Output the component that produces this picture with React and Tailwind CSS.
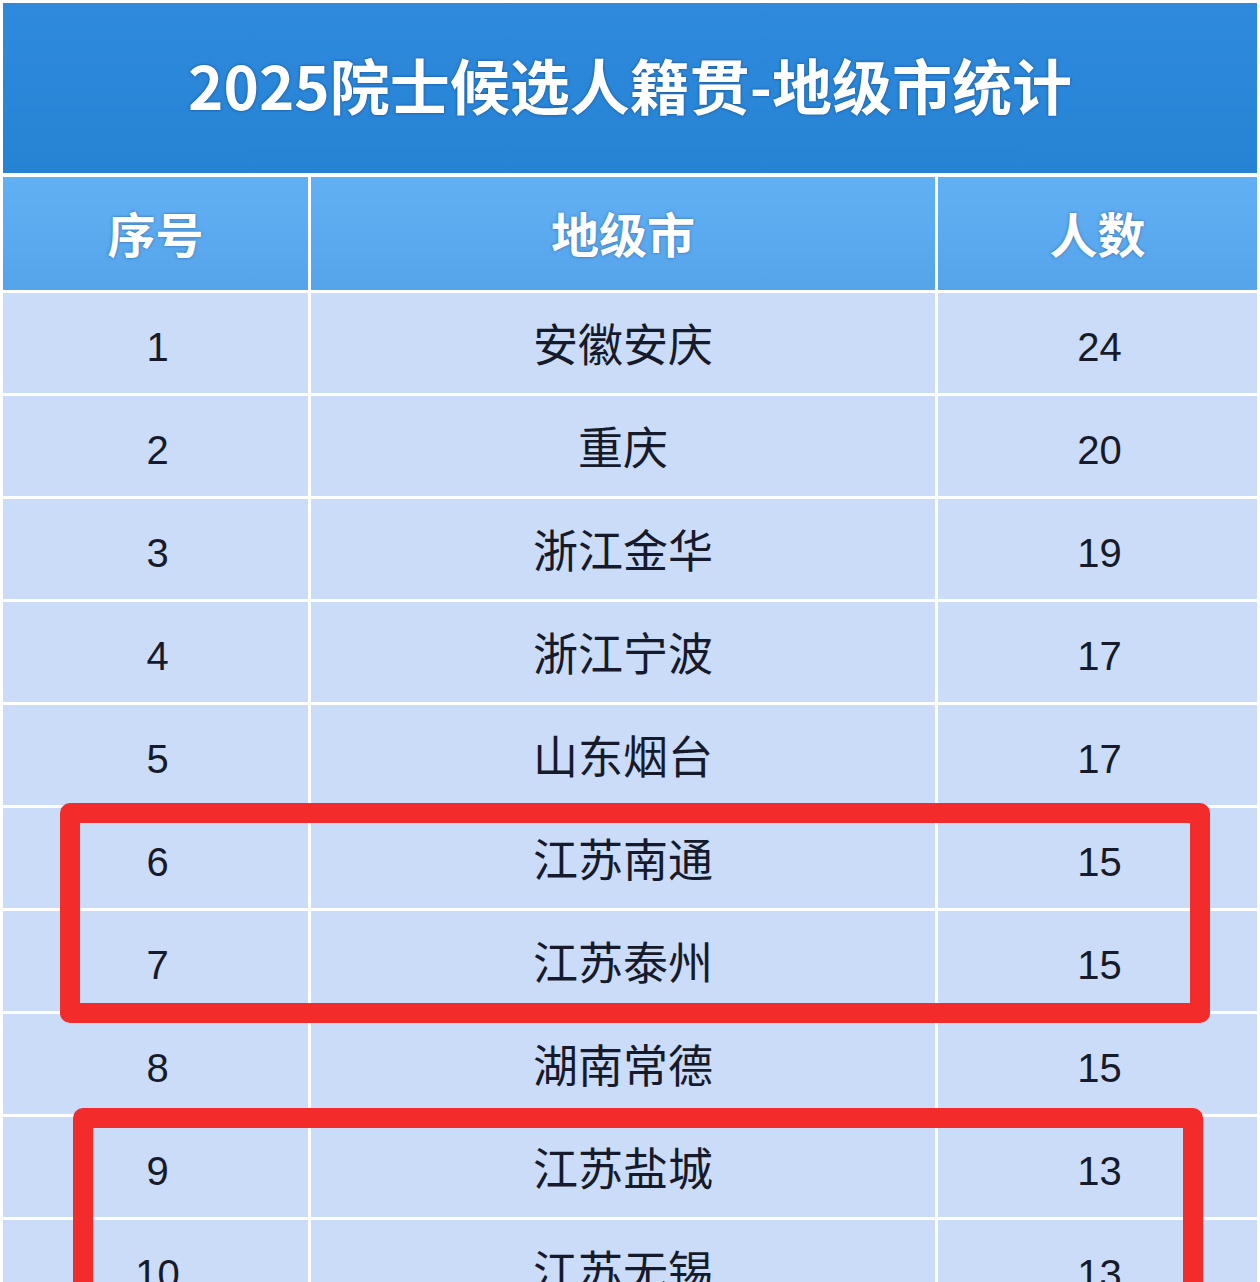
import React from "react"

// 2025 academician candidates by native prefecture-level city
const rows = [
  { no: 1, city: "安徽安庆", count: 24 },
  { no: 2, city: "重庆", count: 20 },
  { no: 3, city: "浙江金华", count: 19 },
  { no: 4, city: "浙江宁波", count: 17 },
  { no: 5, city: "山东烟台", count: 17 },
  { no: 6, city: "江苏南通", count: 15 },
  { no: 7, city: "江苏泰州", count: 15 },
  { no: 8, city: "湖南常德", count: 15 },
  { no: 9, city: "江苏盐城", count: 13 },
  { no: 10, city: "江苏无锡", count: 13 },
]

const font = "font-['Liberation_Sans','Noto_Sans_CJK_SC',sans-serif]"

export default function App() {
  return (
    <div className={`relative w-[1260px] h-[1282px] overflow-hidden bg-white pt-[3px] px-[3px] ${font}`}>
      <div className="flex h-[170px] items-center justify-center bg-gradient-to-b from-[#2f8ade] to-[#2683d3]">
        <h1 className="pb-[8px] font-['Noto_Sans_CJK_SC',sans-serif] text-[60px] font-bold leading-none text-white [text-shadow:0_0_3px_rgba(10,50,110,0.7)]">
          2025院士候选人籍贯-地级市统计
        </h1>
      </div>

      <div className="mt-[4px] grid grid-cols-[305px_624px_319px] gap-[3px]">
        {["序号", "地级市", "人数"].map((h) => (
          <div
            key={h}
            className="flex h-[113px] items-center justify-center bg-gradient-to-b from-[#62b0f4] to-[#55a4ea] pt-[6px] text-[48px] font-bold text-white [text-shadow:0_0_3px_rgba(20,60,120,0.6)]"
          >
            {h}
          </div>
        ))}
        {rows.map((r) => (
          <React.Fragment key={r.no}>
            <div className="flex h-[100px] items-center justify-center bg-[#cbdcf8] pt-[8px] pl-[4px] text-[40px] text-[#161a2b]">
              {r.no}
            </div>
            <div className="flex h-[100px] items-center justify-center bg-[#cbdcf8] pt-[8px] text-[45px] text-[#161a2b]">
              {r.city}
            </div>
            <div className="flex h-[100px] items-center justify-center bg-[#cbdcf8] pt-[8px] pl-[4px] text-[40px] text-[#161a2b]">
              {r.count}
            </div>
          </React.Fragment>
        ))}
      </div>

      {/* red highlight frames drawn over the table */}
      <div className="absolute left-[60px] top-[803px] h-[220px] w-[1150px] rounded-[10px] border-[20px] border-[#f42b2b]" />
      <div className="absolute left-[73px] top-[1108px] h-[240px] w-[1130px] rounded-[10px] border-[20px] border-[#f42b2b]" />
    </div>
  )
}
